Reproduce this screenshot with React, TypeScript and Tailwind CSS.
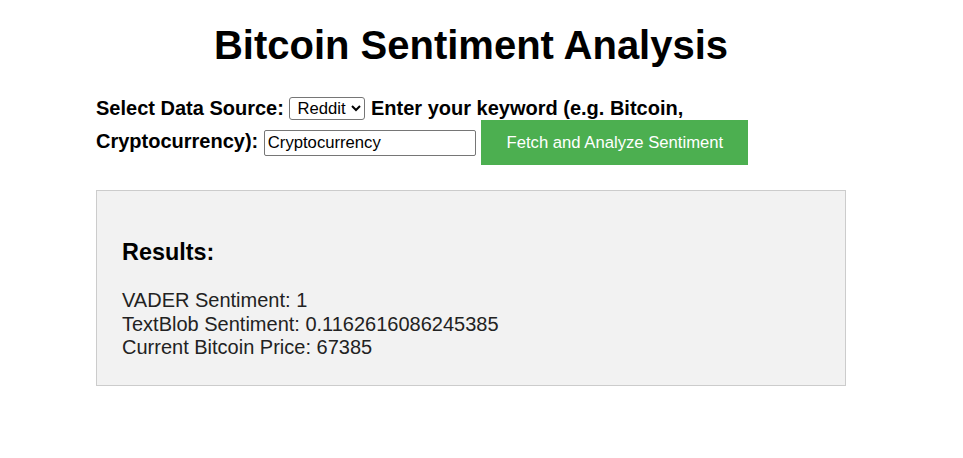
export default function App() {
  return (
    <div className="min-h-[458px] bg-white font-['Liberation_Sans',Arial,sans-serif] text-black">
      <div className="ml-[96px] w-[750px] pt-[22px]">
        <h1 className="mb-[29px] text-center text-[40px] leading-[46px] font-bold">Bitcoin Sentiment Analysis</h1>

        <form className="text-[20px] leading-[23px]" onSubmit={(e) => e.preventDefault()}>
          <label className="font-bold">Select Data Source:</label>{' '}
          <select
            defaultValue="reddit"
            className="h-[23px] rounded-[3px] border border-[#767676] bg-white pl-[3px] pr-[1px] align-[1px] text-[16.67px] leading-[19px]"
          >
            <option value="reddit">Reddit</option>
            <option value="twitter">Twitter</option>
          </select>{' '}
          <label className="font-bold">Enter your keyword (e.g. Bitcoin, Cryptocurrency):</label>{' '}
          <input
            type="text"
            defaultValue="Cryptocurrency"
            className="h-[26px] w-[212px] rounded-[2px] border border-[#767676] px-[3px] text-[16.67px] leading-[19px]"
          />{' '}
          <button
            type="submit"
            className="h-[45px] w-[267px] bg-[#4caf50] text-[16.67px] leading-[19px] text-white"
          >
            Fetch and Analyze Sentiment
          </button>
        </form>

        <div className="mt-[25px] border border-[#cccccc] bg-[#f2f2f2] p-[25px]">
          <h3 className="my-[23px] text-[23.4px] leading-[27px] font-bold">Results:</h3>
          <div className="text-[20px] leading-[23.5px] text-[#222]">
            <div>VADER Sentiment: 1</div>
            <div>TextBlob Sentiment: 0.1162616086245385</div>
            <div>Current Bitcoin Price: 67385</div>
          </div>
        </div>
      </div>
    </div>
  );
}
